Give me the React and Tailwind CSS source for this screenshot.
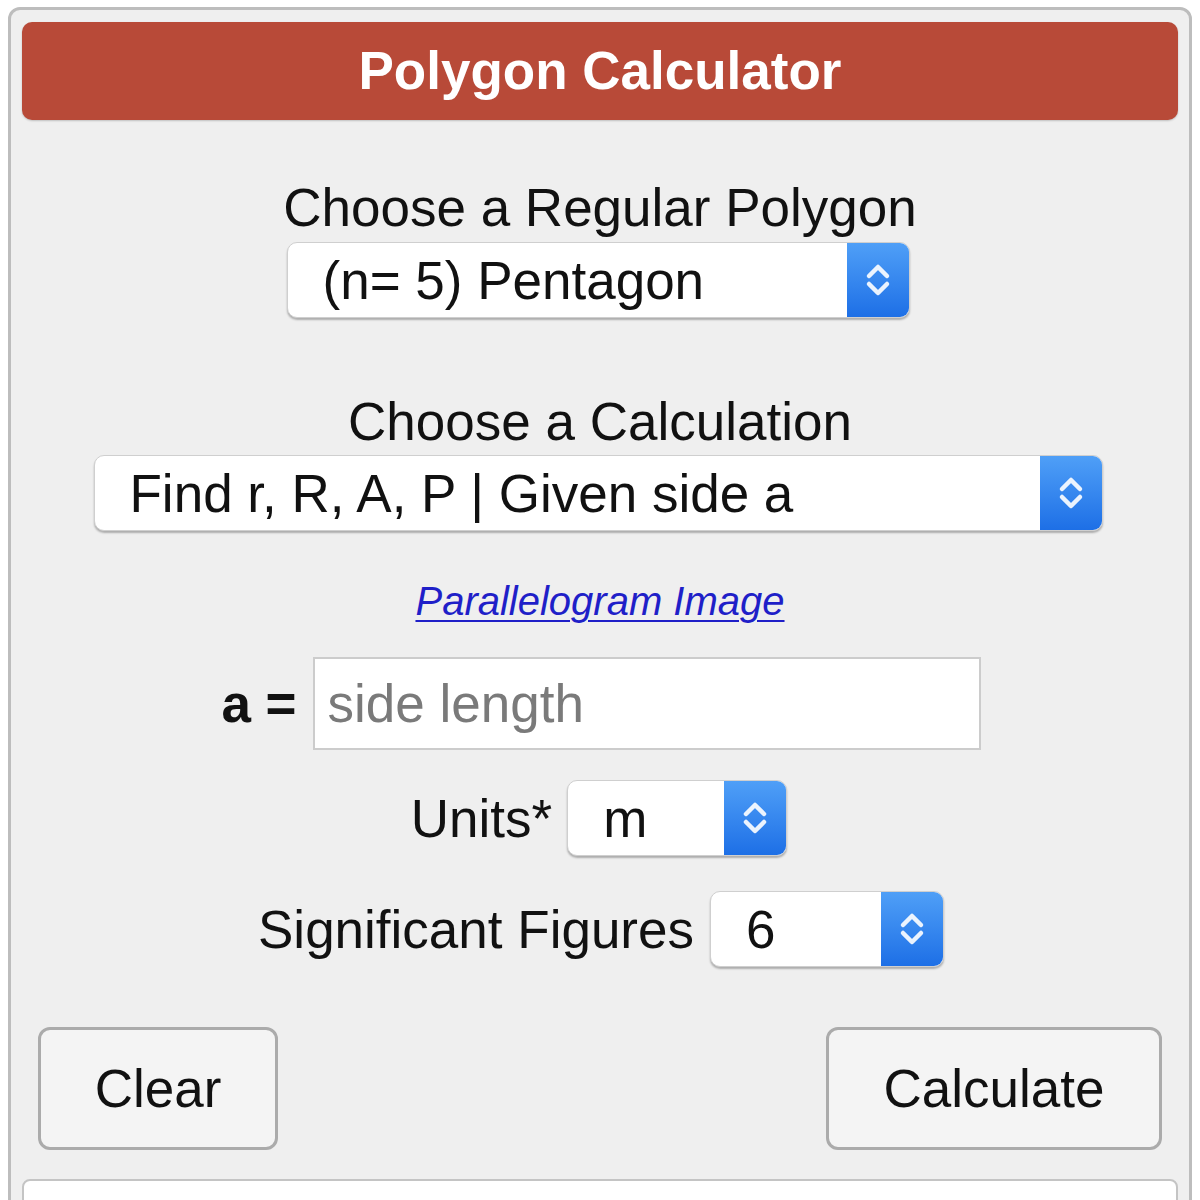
import React from "react";

function Chevrons() {
  return (
    <svg width="28" height="38" viewBox="0 0 28 38" fill="none">
      <path d="M5 15 L14 6 L23 15" stroke="white" strokeWidth="4.5" strokeLinecap="round" strokeLinejoin="round" opacity="0.9" />
      <path d="M5 23 L14 32 L23 23" stroke="white" strokeWidth="4.5" strokeLinecap="round" strokeLinejoin="round" opacity="0.9" />
    </svg>
  );
}

function Select({ text, className }) {
  return (
    <div className={"flex shrink-0 h-[76px] rounded-[10px] bg-white border border-[#cfcfcf] shadow-[0_2px_2px_rgba(0,0,0,0.28)] " + className}>
      <div className="flex-1 flex items-center pl-[35px] text-[53px] leading-none text-[#111] whitespace-nowrap overflow-hidden">
        {text}
      </div>
      <div className="w-[62px] shrink-0 rounded-r-[9px] bg-linear-to-b from-[#4f9ff7] to-[#1d6fe6] flex items-center justify-center">
        <Chevrons />
      </div>
    </div>
  );
}

export default function App() {
  return (
    <div className="h-[1200px] overflow-hidden bg-white pt-[7px] pl-[8px]" style={{ fontFamily: '"Liberation Sans", Arial, Helvetica, sans-serif' }}>
      <div className="w-[1184px] border-[3px] border-[#bdbdbd] rounded-[12px] bg-[#efefef] px-[11px] pt-[12px] flex flex-col">
        <div className="shrink-0 h-[98px] rounded-[10px] bg-[#b84a38] flex items-center justify-center shadow-[0_1px_2px_rgba(0,0,0,0.2)]">
          <span className="text-white font-bold text-[53px] leading-none pb-[2px]">Polygon Calculator</span>
        </div>

        <div className="flex flex-col items-center">
          <div className="mt-[57px] h-[62px] leading-[62px] text-[53px] text-[#111]">Choose a Regular Polygon</div>
          <Select text="(n= 5) Pentagon" className="mt-[3px] w-[623px] ml-[-4px]" />

          <div className="mt-[73px] h-[62px] leading-[62px] text-[53px] text-[#111]">Choose a Calculation</div>
          <Select text="Find r, R, A, P | Given side a" className="mt-[2px] w-[1009px] ml-[-4px]" />

          <a href="#" className="mt-[47px] h-[46px] leading-[46px] text-[40px] italic underline text-[#1f1fc8] decoration-[2px] underline-offset-[5px]">
            Parallelogram Image
          </a>

          <div className="mt-[33px] flex items-center gap-[16px] ml-[2px]">
            <span className="text-[53px] font-bold text-[#111] leading-none">a =</span>
            <div className="w-[668px] h-[93px] bg-white border-2 border-[#cccccc] flex items-center pl-[13px] text-[53px] text-[#7a7a7a] leading-none">
              side length
            </div>
          </div>

          <div className="mt-[30px] flex items-center gap-[15px] ml-[-2px]">
            <span className="text-[53px] text-[#111] leading-none">Units*</span>
            <Select text="m" className="w-[220px]" />
          </div>

          <div className="mt-[35px] flex items-center gap-[16px] ml-[2px]">
            <span className="text-[53px] text-[#111] leading-none">Significant Figures</span>
            <Select text="6" className="w-[234px]" />
          </div>
        </div>

        <div className="mt-[60px] flex justify-between px-[16px]">
          <div className="w-[240px] h-[123px] rounded-[12px] border-[3px] border-[#ababab] bg-[#f4f4f4] flex items-center justify-center text-[53px] text-[#111] leading-none">
            Clear
          </div>
          <div className="w-[336px] h-[123px] rounded-[12px] border-[3px] border-[#ababab] bg-[#f4f4f4] flex items-center justify-center text-[53px] text-[#111] leading-none">
            Calculate
          </div>
        </div>

        <div className="mt-[29px] h-[100px] shrink-0 rounded-[8px] border-2 border-[#c4c4c4] bg-white"></div>
      </div>
    </div>
  );
}
